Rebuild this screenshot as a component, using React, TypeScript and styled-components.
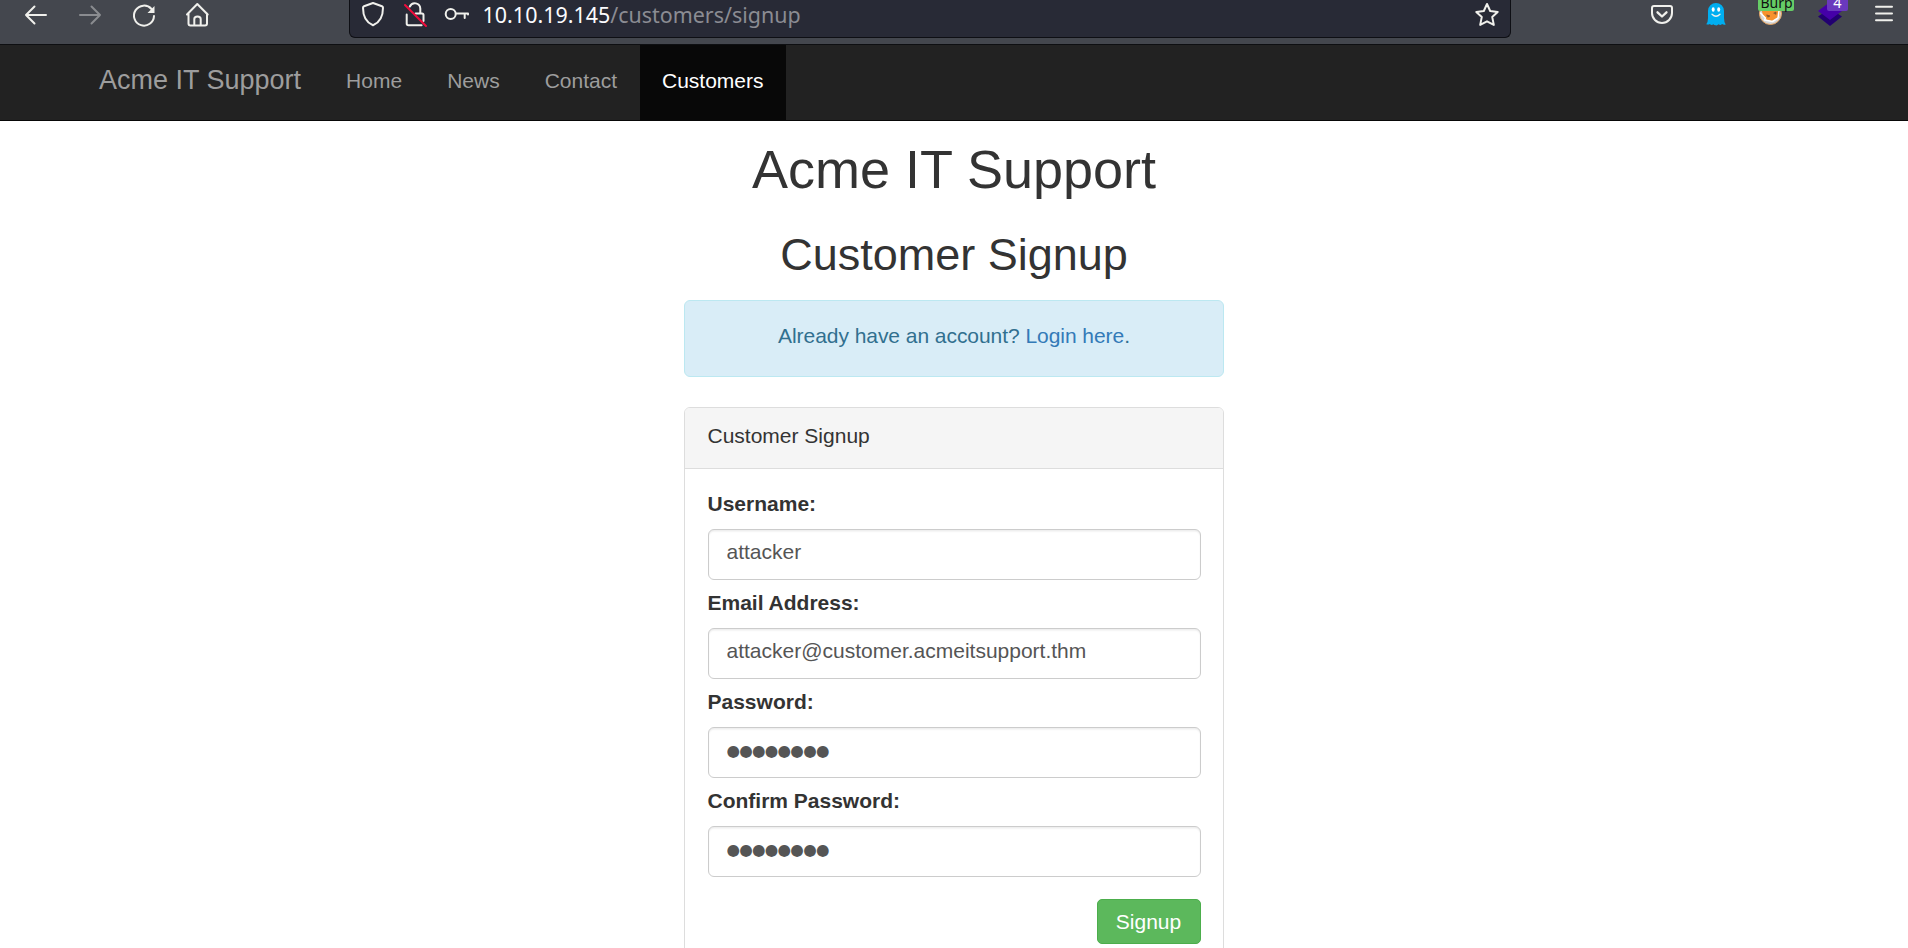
import React from "react";
import styled, { createGlobalStyle } from "styled-components";

const GlobalStyle = createGlobalStyle`
  * { box-sizing: border-box; }
  body {
    margin: 0;
    height: 948px;
    overflow: hidden;
    background: #fff;
    color: #333;
    font-family: "Liberation Sans", Helvetica, Arial, sans-serif;
    font-size: 21px;
    line-height: 30px;
  }
`;

const Window = styled.div`
  height: 948px;
  overflow: hidden;
`;

const Toolbar = styled.div`
  display: flex;
  align-items: flex-start;
  height: 45px;
  padding-left: 21px;
  background: #44474e;
  border-bottom: 1px solid #0e0f12;
`;

const IconGroup = styled.div<{ $gap: number }>`
  display: flex;
  gap: ${(p) => p.$gap}px;
`;

const Icon = styled.svg<{ $dim?: boolean; $overhang?: number }>`
  display: block;
  flex: none;
  width: ${(p) => (p.$overhang ? 40 : 30)}px;
  height: 30px;
  margin-right: ${(p) => -(p.$overhang ?? 0)}px;
  fill: none;
  stroke: ${(p) => (p.$dim ? "#8a8c90" : "#f0f0ec")};
  stroke-width: 2;
  stroke-linecap: round;
  stroke-linejoin: round;
`;

const AddressBar = styled.div`
  display: flex;
  width: 1162px;
  height: 38px;
  margin: 0 136px 0 136px;
  padding: 0 8px;
  background: #282a36;
  border: 1px solid #0e0f14;
  border-top: 0;
  border-radius: 0 0 6px 6px;
`;

const Url = styled.div`
  flex: 1;
  padding-left: 10.6px;
  color: #8b8c93;
  font: 21.45px/30px "Noto Sans", sans-serif;
  white-space: nowrap;
`;

const Host = styled.span`
  color: #fbfbfe;
`;

const NavBar = styled.nav`
  display: flex;
  height: 76px;
  padding-left: 76.5px;
  background: #222;
  border-bottom: 1px solid #080808;
`;

const Brand = styled.a`
  padding: 0 22.5px;
  color: #9d9d9d;
  font-size: 27px;
  line-height: 71px;
`;

const NavItem = styled.a<{ $active?: boolean }>`
  padding: 0 22.5px;
  line-height: 72px;
  color: ${(p) => (p.$active ? "#fff" : "#9d9d9d")};
  background: ${(p) => (p.$active ? "#080808" : "transparent")};
`;

const Page = styled.main`
  width: 540px;
  margin: 0 auto;
  padding-top: 18px;
`;

const Title = styled.h1`
  margin: 0 0 31px;
  font-size: 54px;
  font-weight: 400;
  line-height: 60px;
  text-align: center;
  white-space: nowrap;
`;

const Subtitle = styled.h2`
  margin: 0 0 20px;
  font-size: 45px;
  font-weight: 400;
  line-height: 50px;
  text-align: center;
`;

const Notice = styled.div`
  height: 77px;
  margin-bottom: 30px;
  padding-top: 20px;
  color: #31708f;
  background: #d9edf7;
  border: 1px solid #bce8f1;
  border-radius: 6px;
  letter-spacing: -0.05px;
  text-align: center;
`;

const Link = styled.a`
  color: #337ab7;
`;

const Panel = styled.section`
  height: 600px;
  border: 1px solid #ddd;
  border-radius: 6px;
  background: #fff;
`;

const PanelHeading = styled.div`
  height: 61px;
  padding: 13px 22.5px;
  background: #f5f5f5;
  border-bottom: 1px solid #ddd;
  border-radius: 5px 5px 0 0;
`;

const Form = styled.div`
  display: flex;
  flex-direction: column;
  padding: 20px 22.5px;
`;

const Field = styled.label`
  display: flex;
  flex-direction: column;
  gap: 10px;
  height: 99px;
  font-weight: 700;
`;

const Input = styled.input<{ $masked?: boolean }>`
  width: 100%;
  height: 51px;
  padding: ${(p) => (p.$masked ? "0 18px 4px" : "0 18px 5px")};
  color: #555;
  font: ${(p) => (p.$masked ? '15.5px "DejaVu Sans"' : '21px "Liberation Sans"')}, sans-serif;
  letter-spacing: ${(p) => (p.$masked ? "-0.75px" : "normal")};
  background: #fff;
  border: 1px solid #ccc;
  border-radius: 6px;
  box-shadow: inset 0 1.5px 1.5px rgba(0, 0, 0, 0.075);
  outline: 0;
`;

const SubmitButton = styled.button`
  align-self: flex-end;
  width: 104px;
  height: 45px;
  margin-top: 14px;
  padding: 0;
  color: #fff;
  font: 21px/43px "Liberation Sans", sans-serif;
  background: #5cb85c;
  border: 1px solid #4cae4c;
  border-radius: 5px;
`;

const BackIcon = () => (
  <Icon viewBox="0 0 30 30"><path d="M25 15H5M13.5 6.5L5 15l8.5 8.5" /></Icon>
);
const ForwardIcon = () => (
  <Icon $dim viewBox="0 0 30 30"><path d="M5 15h20M16.500 6.500L25 15l-8.500 8.500" /></Icon>
);
const ReloadIcon = () => (
  <Icon viewBox="0 0 30 30">
    <path d="M22.500 9A10 10 0 1 0 25 16" />
    <path d="M25.500 6v7h-7z" fill="#f0f0ec" stroke="none" />
  </Icon>
);
const HomeIcon = () => (
  <Icon viewBox="0 0 30 30">
    <path d="M4 14.500L14.300 4l10.400 10.500M5.500 13.500v10q0 2 2 2h14.500q2 0 2-2v-10" />
    <path d="M11.300 25v-6q0-2.500 3.200-2.500t3.200 2.500v6" />
  </Icon>
);
const ShieldIcon = () => (
  <Icon viewBox="0 0 30 30">
    <path d="M15 3l9 3.300q1 .4 1 1.500C25 16 22 22.500 15 25.300 8 22.500 5 16 5 7.800q0-1.100 1-1.500z" />
  </Icon>
);
const InsecureIcon = () => (
  <Icon viewBox="0 0 30 30">
    <path d="M6.700 14.500v9q0 1.700 1.700 1.700h13.200M15.500 13.500h6.500q1.500 0 1.500 1.500v6M20.300 13V8.500a5.500 5.500 0 0 0-10.500-2" />
    <path d="M5 5l21 21" stroke="#f00c3c" />
  </Icon>
);
const KeyIcon = () => (
  <Icon viewBox="0 0 30 30">
    <circle cx="8.700" cy="14" r="5" />
    <path d="M14 13.500h12v1M22.700 13.500V18" />
  </Icon>
);
const StarIcon = () => (
  <Icon viewBox="0 0 30 30">
    <path d="M15 4l3.200 7 7.500.9-5.500 5 1.600 8L15 21.300l-6.800 3.600 1.600-8-5.500-5 7.500-.9z" />
  </Icon>
);
const PocketIcon = () => (
  <Icon viewBox="0 0 30 30">
    <path d="M7 6h16q2 0 2 2v5a10 10 0 0 1-20 0V8q0-2 2-2z" />
    <path d="M10.500 12.300L15 16.500l4.500-4.200" strokeWidth="2.300" />
  </Icon>
);
const GhostIcon = () => (
  <Icon viewBox="0 0 30 30">
    <path
      d="M7 11a8 8 0 0 1 16 0v7q0 4 1.700 6.500-2 .7-3.700-.5-1.500 2-3.500.3-1.200 1.400-2.600 1-1.500.3-2.500-1-2 1.500-3.500-.3-1.800 1-3.600.3Q7 22 7 18z"
      fill="#00aef0"
      stroke="none"
    />
    <g fill="#fff" stroke="none">
      <ellipse cx="12.200" cy="9.500" rx="1.500" ry="2.200" />
      <ellipse cx="17.700" cy="9.500" rx="1.500" ry="2.200" />
    </g>
    <path d="M11 14.300q4 4 8 0" strokeWidth="1.300" />
  </Icon>
);
const ProxyIcon = () => (
  <Icon $overhang={4} viewBox="0 0 40 30" stroke="none">
    <circle cx="15.500" cy="13.500" r="11" fill="#d5d7d8" stroke="#e6a15b" strokeWidth="1" />
    <path d="M6 8h20l-2 9-7 4-5-1-4-5z" fill="#f7922d" stroke="none" />
    <path d="M5.500 13l5 5-1 2 8 1.500 5.500-3.500 1-7" stroke="#fff" strokeWidth="1.500" />
    <path d="M12 15l3 1-2 1zM19 13l2-1v2z" fill="#6b4528" stroke="#87552b" strokeWidth=".7" />
    <rect x="3" y="-5" width="36" height="16" rx="2" fill="#66cc66" stroke="none" />
    <text x="21.500" y="8" textAnchor="middle" fill="#111" stroke="none" fontFamily="Noto Sans, sans-serif" fontSize="14">Burp</text>
  </Icon>
);
const LayersIcon = () => (
  <Icon $overhang={10} viewBox="0 0 40 30">
    <path d="M3 16.500l12-8 12 8-12 9.500z" fill="#220070" stroke="none" />
    <path d="M3 11L15 2l12 9-12 9z" fill="#4500a8" stroke="none" />
    <rect x="12" y="-5" width="21" height="16" rx="2" fill="#6a39bd" stroke="none" />
    <text x="22.500" y="8" textAnchor="middle" fill="#fff" stroke="none" fontFamily="Noto Sans, sans-serif" fontSize="14.500">4</text>
  </Icon>
);
const MenuIcon = () => (
  <Icon viewBox="0 0 30 30"><path d="M7 6.700h16M7 13.500h16M7 20.200h16" /></Icon>
);

const navItems = ["Home", "News", "Contact", "Customers"];

const fields = [
  { label: "Username:", value: "attacker" },
  { label: "Email Address:", value: "attacker@customer.acmeitsupport.thm" },
  { label: "Password:", value: "●●●●●●●●", masked: true },
  { label: "Confirm Password:", value: "●●●●●●●●", masked: true },
];

export default function App() {
  return (
    <Window>
      <GlobalStyle />
      <Toolbar>
        <IconGroup $gap={24}>
          <BackIcon />
          <ForwardIcon />
          <ReloadIcon />
          <HomeIcon />
        </IconGroup>
        <AddressBar>
          <IconGroup $gap={12}>
            <ShieldIcon />
            <InsecureIcon />
            <KeyIcon />
          </IconGroup>
          <Url><Host>10.10.19.145</Host>/customers/signup</Url>
          <StarIcon />
        </AddressBar>
        <IconGroup $gap={24}>
          <PocketIcon />
          <GhostIcon />
          <ProxyIcon />
          <LayersIcon />
          <MenuIcon />
        </IconGroup>
      </Toolbar>
      <NavBar>
        <Brand>Acme IT Support</Brand>
        {navItems.map((item) => (
          <NavItem key={item} $active={item === "Customers"}>{item}</NavItem>
        ))}
      </NavBar>
      <Page>
        <Title>Acme IT Support</Title>
        <Subtitle>Customer Signup</Subtitle>
        <Notice>Already have an account? <Link>Login here</Link>.</Notice>
        <Panel>
          <PanelHeading>Customer Signup</PanelHeading>
          <Form>
            {fields.map((f) => (
              <Field key={f.label}>
                {f.label}
                <Input defaultValue={f.value} $masked={f.masked} />
              </Field>
            ))}
            <SubmitButton>Signup</SubmitButton>
          </Form>
        </Panel>
      </Page>
    </Window>
  );
}
